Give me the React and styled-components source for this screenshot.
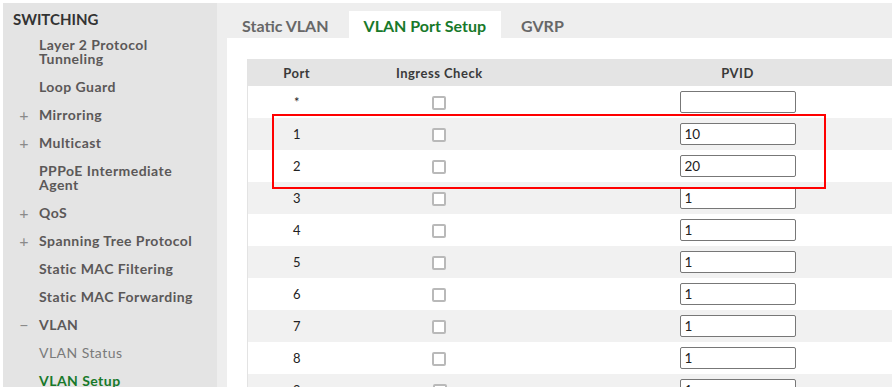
import styled, { createGlobalStyle } from "styled-components";

const Global = createGlobalStyle`
  html, body {
    margin: 0;
    padding: 0;
    background: #ffffff;
    overflow: hidden;
  }
  body {
    font-family: Lato, "Open Sans", sans-serif;
  }
`;

const Page = styled.div`
  display: flex;
  width: 892px;
  height: 387px;
  padding-top: 3px;
  box-sizing: border-box;
  overflow: hidden;
`;

const Sidebar = styled.nav`
  width: 214px;
  margin-left: 3px;
  flex-shrink: 0;
  background: #e4e4e4;
`;

const SideTitle = styled.div`
  padding: 7px 0 0 10px;
  height: 21px;
  font-size: 15px;
  font-weight: 700;
  color: #333;
`;

const SideItem = styled.div`
  display: flex;
  align-items: flex-start;
  padding: 7px 8px 7px 0;
  font-size: 14px;
  letter-spacing: 0.45px;
  line-height: 14px;
  font-weight: ${(p) => (p.$plain ? 400 : 700)};
  color: ${(p) => (p.$active ? "#18792a" : p.$plain ? "#7a7a7a" : "#5b5858")};
`;

const Sign = styled.span`
  width: 36px;
  flex-shrink: 0;
  text-align: right;
  font-weight: 400;
  color: #8a8a8a;
  font-size: 16px;
  span {
    display: inline-block;
    width: 14px;
    text-align: center;
    margin-right: 8px;
  }
`;

const Main = styled.main`
  flex: 1;
  display: flex;
  flex-direction: column;
  background: #eeeeee;
  padding-left: 10px;
  min-width: 0;
  overflow: hidden;
`;

const TabBar = styled.div`
  display: flex;
  flex-shrink: 0;
  align-items: flex-end;
  gap: 5px;
  height: 35px;
`;

const Tab = styled.div`
  height: 27px;
  padding: 2px 15px 0;
  box-sizing: border-box;
  display: flex;
  align-items: center;
  font-size: 16px;
  font-weight: 700;
  color: ${(p) => (p.$active ? "#18792a" : "#676767")};
  background: ${(p) => (p.$active ? "#ffffff" : "transparent")};
`;

const Panel = styled.section`
  flex: 1 0 auto;
  background: #ffffff;
  padding: 21px 0 0 20px;
`;

const TableWrap = styled.div`
  position: relative;
  width: 694px;
`;

const Table = styled.table`
  border-collapse: collapse;
  table-layout: fixed;
  width: 694px;
  border-left: 1px solid #e3e3e3;
`;

const Th = styled.th`
  height: 27px;
  padding: 0;
  background: #e4e4e4;
  font-size: 13px;
  letter-spacing: 0.5px;
  font-weight: 700;
  color: #3a3a3a;
  text-align: center;
`;

const Row = styled.tr`
  height: 32px;
  background: ${(p) => (p.$odd ? "#f1f1f1" : "#ffffff")};
`;

const Td = styled.td`
  padding: 0;
  text-align: center;
  font-size: 13px;
  color: #222;
`;

const Check = styled.span`
  display: inline-block;
  width: 14px;
  height: 14px;
  box-sizing: border-box;
  border: 2px solid #b9b9b9;
  border-radius: 2px;
  background: #fff;
  vertical-align: middle;
`;

const Input = styled.input`
  width: 116px;
  height: 22px;
  box-sizing: border-box;
  border: 1px solid #777;
  border-radius: 2px;
  padding: 0 4px;
  font-family: Lato, sans-serif;
  font-size: 13.5px;
  color: #222;
  vertical-align: middle;
`;

const Highlight = styled.div`
  position: absolute;
  left: 25px;
  top: 55px;
  width: 554px;
  height: 75px;
  box-sizing: border-box;
  border: 2px solid #ff0000;
  pointer-events: none;
`;

const menu = [
  { label: ["Layer 2 Protocol", "Tunneling"] },
  { label: ["Loop Guard"] },
  { label: ["Mirroring"], sign: "+" },
  { label: ["Multicast"], sign: "+" },
  { label: ["PPPoE Intermediate", "Agent"] },
  { label: ["QoS"], sign: "+" },
  { label: ["Spanning Tree Protocol"], sign: "+" },
  { label: ["Static MAC Filtering"] },
  { label: ["Static MAC Forwarding"] },
  { label: ["VLAN"], sign: "−" },
  { label: ["VLAN Status"], plain: true },
  { label: ["VLAN Setup"], active: true },
];

const ports = [
  { port: "*", pvid: "" },
  { port: "1", pvid: "10" },
  { port: "2", pvid: "20" },
  { port: "3", pvid: "1" },
  { port: "4", pvid: "1" },
  { port: "5", pvid: "1" },
  { port: "6", pvid: "1" },
  { port: "7", pvid: "1" },
  { port: "8", pvid: "1" },
  { port: "9", pvid: "1" },
];

export default function App() {
  return (
    <>
      <Global />
      <Page>
        <Sidebar>
          <SideTitle>SWITCHING</SideTitle>
          {menu.map((m, i) => (
            <SideItem key={i} $plain={m.plain} $active={m.active}>
              <Sign>{m.sign ? <span>{m.sign}</span> : null}</Sign>
              <div>
                {m.label.map((l, j) => (
                  <div key={j}>{l}</div>
                ))}
              </div>
            </SideItem>
          ))}
        </Sidebar>
        <Main>
          <TabBar>
            <Tab>Static VLAN</Tab>
            <Tab $active>VLAN Port Setup</Tab>
            <Tab>GVRP</Tab>
          </TabBar>
          <Panel>
            <TableWrap>
              <Table>
                <colgroup>
                  <col style={{ width: 98 }} />
                  <col style={{ width: 188 }} />
                  <col style={{ width: 408 }} />
                </colgroup>
                <thead>
                  <tr>
                    <Th>Port</Th>
                    <Th>Ingress Check</Th>
                    <Th>PVID</Th>
                  </tr>
                </thead>
                <tbody>
                  {ports.map((r, i) => (
                    <Row key={r.port} $odd={i % 2 === 1}>
                      <Td>{r.port}</Td>
                      <Td>
                        <Check />
                      </Td>
                      <Td>
                        <Input defaultValue={r.pvid} />
                      </Td>
                    </Row>
                  ))}
                </tbody>
              </Table>
              <Highlight />
            </TableWrap>
          </Panel>
        </Main>
      </Page>
    </>
  );
}
